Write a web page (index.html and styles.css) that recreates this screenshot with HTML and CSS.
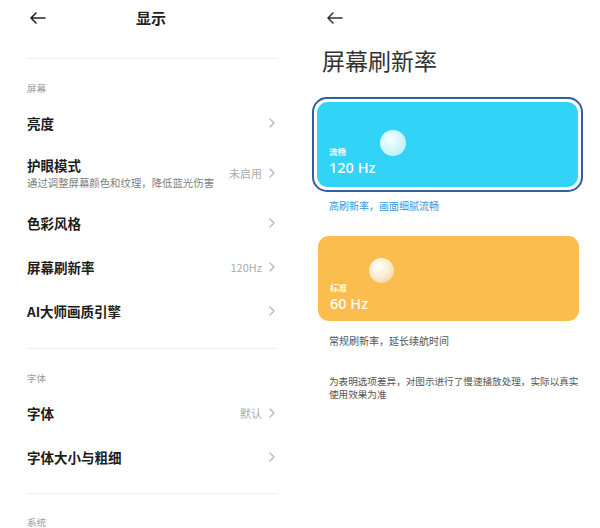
FILE: index.html
```html
<!DOCTYPE html>
<html lang="zh-CN">
<head>
<meta charset="utf-8">
<title>显示 / 屏幕刷新率</title>
<link rel="stylesheet" href="styles.css">
</head>
<body>
<div class="screens">
  <section class="panel display">
    <div class="topbar">
      <svg class="back" width="17" height="12" viewBox="0 0 17 12"><path d="M16 6H2M7 1L2 6l5 5" fill="none" stroke="#222" stroke-width="1.6" stroke-linecap="round" stroke-linejoin="round"/></svg>
      <div class="title">显示</div>
      <span></span>
    </div>
    <div class="divider first"></div>
    <div class="section-label">屏幕</div>
    <div class="row"><span class="row-title">亮度</span><span class="chev"><svg width="6" height="10" viewBox="0 0 6 10"><path d="M1 1l4 4-4 4" fill="none" stroke="#b5b5b5" stroke-width="1.2" stroke-linecap="round" stroke-linejoin="round"/></svg></span></div>
    <div class="row tall">
      <div class="row-text"><span class="row-title">护眼模式</span><span class="row-sub">通过调整屏幕颜色和纹理，降低蓝光伤害</span></div>
      <span class="row-value">未启用</span><span class="chev"><svg width="6" height="10" viewBox="0 0 6 10"><path d="M1 1l4 4-4 4" fill="none" stroke="#b5b5b5" stroke-width="1.2" stroke-linecap="round" stroke-linejoin="round"/></svg></span>
    </div>
    <div class="row"><span class="row-title">色彩风格</span><span class="chev"><svg width="6" height="10" viewBox="0 0 6 10"><path d="M1 1l4 4-4 4" fill="none" stroke="#b5b5b5" stroke-width="1.2" stroke-linecap="round" stroke-linejoin="round"/></svg></span></div>
    <div class="row"><span class="row-title">屏幕刷新率</span><span class="row-value">120Hz</span><span class="chev"><svg width="6" height="10" viewBox="0 0 6 10"><path d="M1 1l4 4-4 4" fill="none" stroke="#b5b5b5" stroke-width="1.2" stroke-linecap="round" stroke-linejoin="round"/></svg></span></div>
    <div class="row"><span class="row-title">AI大师画质引擎</span><span class="chev"><svg width="6" height="10" viewBox="0 0 6 10"><path d="M1 1l4 4-4 4" fill="none" stroke="#b5b5b5" stroke-width="1.2" stroke-linecap="round" stroke-linejoin="round"/></svg></span></div>
    <div class="spacer a"></div>
    <div class="divider"></div>
    <div class="section-label">字体</div>
    <div class="row"><span class="row-title">字体</span><span class="row-value">默认</span><span class="chev"><svg width="6" height="10" viewBox="0 0 6 10"><path d="M1 1l4 4-4 4" fill="none" stroke="#b5b5b5" stroke-width="1.2" stroke-linecap="round" stroke-linejoin="round"/></svg></span></div>
    <div class="row"><span class="row-title">字体大小与粗细</span><span class="chev"><svg width="6" height="10" viewBox="0 0 6 10"><path d="M1 1l4 4-4 4" fill="none" stroke="#b5b5b5" stroke-width="1.2" stroke-linecap="round" stroke-linejoin="round"/></svg></span></div>
    <div class="spacer b"></div>
    <div class="divider"></div>
    <div class="section-label last">系统</div>
  </section>

  <section class="panel refresh">
    <div class="topbar2">
      <svg class="back" width="17" height="12" viewBox="0 0 17 12"><path d="M16 6H2M7 1L2 6l5 5" fill="none" stroke="#333" stroke-width="1.5" stroke-linecap="round" stroke-linejoin="round"/></svg>
    </div>
    <h1 class="big-title">屏幕刷新率</h1>
    <div class="card-ring">
      <div class="card blue">
        <span class="ball ball-blue"></span>
        <div class="card-label">流畅</div>
        <div class="card-value">120 Hz</div>
      </div>
    </div>
    <p class="desc active">高刷新率，画面细腻流畅</p>
    <div class="card orange">
      <span class="ball ball-orange"></span>
      <div class="card-label">标准</div>
      <div class="card-value">60 Hz</div>
    </div>
    <p class="desc">常规刷新率，延长续航时间</p>
    <p class="note">为表明选项差异，对图示进行了慢速播放处理，实际以真实<br>使用效果为准</p>
  </section>
</div>
</body>
</html>
```

FILE: styles.css
```css
* { box-sizing: border-box; }
html, body { margin: 0; padding: 0; background: #fff; }
body {
  font-family: "Noto Sans CJK SC", "Noto Sans", sans-serif;
  color: #1c1c1c;
  width: 600px;
  height: 528px;
  overflow: hidden;
}
.screens {
  display: grid;
  grid-template-columns: 300px 300px;
  height: 528px;
}
.panel { position: relative; overflow: hidden; }

/* left panel */
.topbar {
  height: 36px;
  display: grid;
  grid-template-columns: 1fr auto 1fr;
  align-items: center;
  padding: 0 27px 0 29px;
}
.topbar .back { display: block; }
.title {
  font-size: 15px;
  font-weight: 700;
  line-height: 20px;
  color: #222;
}
.divider {
  height: 1px;
  background: #efefef;
  margin: 0 23px 0 27px;
}
.divider.first { margin-top: 22px; }
.section-label {
  padding: 23px 27px 7px;
  font-size: 9.5px;
  line-height: 12px;
  color: #9a9a9a;
}
.section-label.last { padding-top: 22px; }
.row {
  height: 44px;
  display: flex;
  align-items: center;
  padding: 0 25px 0 27px;
}
.row.tall { height: 56px; }
.row-text {
  display: flex;
  flex-direction: column;
  flex: 1;
}
.row-title {
  font-size: 13.5px;
  font-weight: 700;
  line-height: 18px;
  color: #1c1c1c;
  flex: 1;
}
.row-text .row-title { flex: none; }
.row-sub {
  margin-top: 2px;
  font-size: 10.4px;
  line-height: 14px;
  color: #7e7e7e;
  white-space: nowrap;
}
.row-value {
  font-size: 11px;
  color: #ababab;
  margin-right: 7px;
  line-height: 14px;
}
.chev { display: flex; align-items: center; }
.spacer.a { height: 15px; }
.spacer.b { height: 14px; }

/* right panel */
.topbar2 {
  height: 36px;
  display: flex;
  align-items: center;
  padding-left: 26px;
}
.big-title {
  margin: 9px 0 0;
  padding-left: 22px;
  font-size: 23px;
  font-weight: 400;
  line-height: 30px;
  color: #333;
}
.card-ring {
  margin: 22px 0 0 12px;
  width: 271px;
  height: 95px;
  border: 2px solid #2e5ea3;
  border-radius: 15px;
  padding: 3px;
  background: #fff;
}
.card {
  position: relative;
  border-radius: 11px;
  height: 85px;
  padding: 43px 0 0 12px;
  color: #fff;
}
.card.blue {
  height: 85px;
  background: #31d3f6;
}
.card.orange {
  width: 261px;
  margin: 23px 0 0 18px;
  padding-top: 45px;
  background: #fbbd4e;
}
.card-label {
  font-size: 8.5px;
  line-height: 12px;
  font-weight: 700;
  opacity: 0.92;
}
.card-value {
  font-family: "Noto Sans", "Noto Sans CJK SC", sans-serif;
  font-size: 14.5px;
  line-height: 20px;
  font-weight: 500;
}
.ball {
  position: absolute;
  width: 26px;
  height: 26px;
  border-radius: 50%;
}
.ball-blue {
  left: 63px;
  top: 28px;
  background: radial-gradient(circle at 40% 38%, #f4ffff 0%, #d6f7fb 45%, #a9e9f3 100%);
}
.ball-orange {
  left: 51px;
  top: 22px;
  width: 25px;
  height: 25px;
  background: radial-gradient(circle at 40% 36%, #fffef8 0%, #fbefd4 45%, #eccb86 100%);
}
.desc {
  margin: 7px 0 0;
  padding-left: 29px;
  font-size: 10px;
  line-height: 14px;
  color: #555;
}
.desc.active { color: #3596de; }
.card.orange + .desc { margin-top: 13px; }
.note {
  margin: 27px 0 0;
  padding-left: 29px;
  font-size: 9.6px;
  line-height: 13px;
  color: #555;
  white-space: nowrap;
}
```
